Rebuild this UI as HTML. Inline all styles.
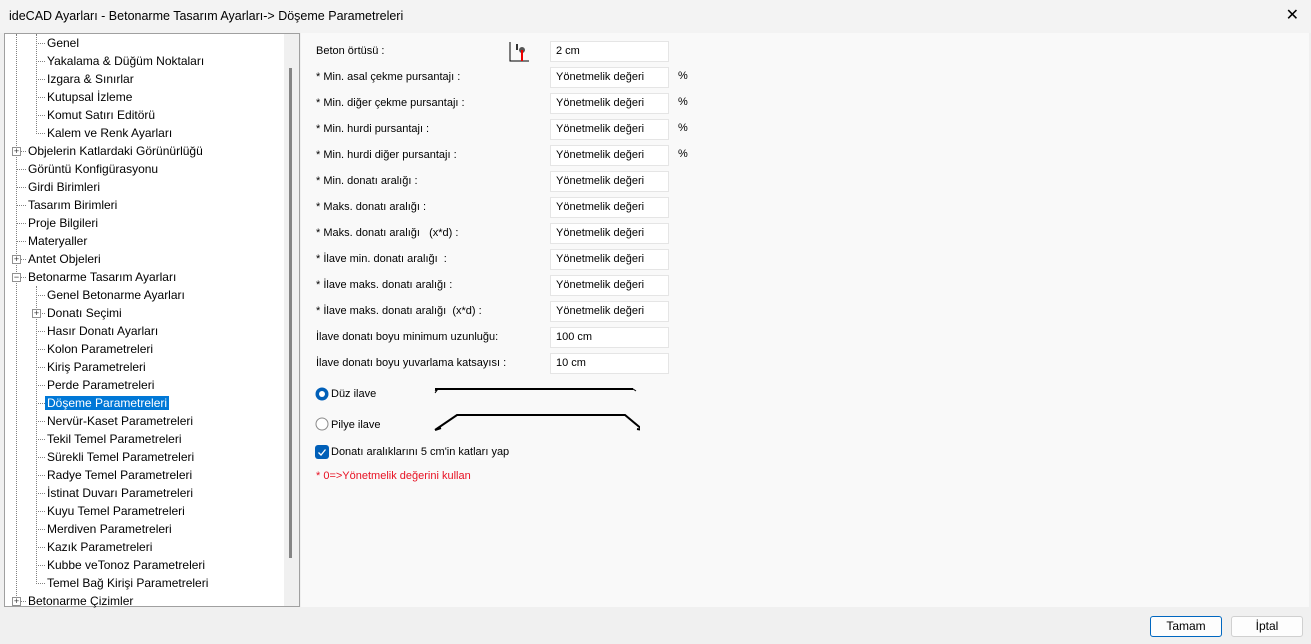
<!DOCTYPE html>
<html><head><meta charset="utf-8"><style>
*{margin:0;padding:0;box-sizing:border-box}
body{width:1311px;height:644px;overflow:hidden;background:#f0f0f0;font-family:"Segoe UI","Liberation Sans",sans-serif;font-size:12px;color:#000;position:relative}
.title{position:absolute;left:0;top:0;width:1311px;height:33px;background:#f3f3f3;font-size:12.5px;line-height:33px;padding-left:9px}
.close{position:absolute;right:12px;top:8px;font-size:16px;line-height:16px}
.tree{position:absolute;left:4px;top:33px;width:296px;height:574px;background:#fff;border:1px solid #a0a0a0;overflow:hidden}
.sb{position:absolute;left:279px;top:0;width:16px;height:574px;background:#f0f0f0}
.thumb{position:absolute;left:284px;top:34px;width:3px;height:490px;background:#858585}
.ti{position:absolute;white-space:nowrap;line-height:16px;font-size:12px}
.vl{position:absolute;border-left:1px dotted #808080}
.hl{position:absolute;border-top:1px dotted #808080;width:8px}
.pb{position:absolute;width:9px;height:9px;border:1px solid #919191;background:#fff;font-size:9px;line-height:7px;text-align:center;color:#333}
.sel{background:#0078d7;color:#fff;padding:0 2px}
.right{position:absolute;left:301px;top:33px;width:1008px;height:574px;background:#f9f9f9}
.lb{position:absolute;left:316px;font-size:11px;line-height:14px}
.lb b{font-weight:normal}
.in{position:absolute;left:550px;width:119px;height:21px;background:#fff;border:1px solid #e5e5e5;font-size:11px;line-height:19px;padding-left:5px}
.pc{position:absolute;left:678px;font-size:11px}
.btn{position:absolute;top:616px;width:72px;height:21px;background:#fdfdfd;border:1px solid #d0d0d0;border-radius:3px;text-align:center;line-height:19px;font-size:12px}
</style></head><body>
<div class="title">ideCAD Ayarları - Betonarme Tasarım Ayarları-&gt; Döşeme Parametreleri<span class="close">✕</span></div>
<div class="tree">
<div class="sb"></div><div class="thumb"></div>
<div class="vl" style="left:31px;top:0;height:100px"></div>
<div class="vl" style="left:11px;top:0;height:574px"></div>
<div class="vl" style="left:31px;top:252px;height:298px"></div>
</div>
<div id="t"></div>
<div class="right"></div>
<div class="lb" style="top:44px">Beton örtüsü :</div>
<svg style="position:absolute;left:509px;top:42px" width="22" height="20"><path d="M1 0V19H20" stroke="#000" fill="none"/><rect x="7" y="2" width="2" height="6" fill="#333"/><circle cx="13" cy="8" r="3" fill="#555"/><path d="M13 8V19" stroke="#e00" stroke-width="2"/></svg>
<div class="in" style="top:41px">2 cm</div>
<div id="f"></div>
<svg style="position:absolute;left:430px;top:385px" width="210" height="50"><path d="M5 6L8 4H203L206 6M8 4L5 8" stroke="#000" fill="none" stroke-width="1"/><path d="M5 4H203" stroke="#000" stroke-width="2"/><path d="M5 45L27 30H195L213 45M5 45l6-2M213 45l-6-1" stroke="#000" fill="none" stroke-width="2"/></svg>
<svg style="position:absolute;left:315px;top:387px" width="14" height="14"><circle cx="7" cy="7" r="6.5" fill="#005fb8"/><circle cx="7" cy="7" r="3" fill="#fff"/></svg>
<div class="lb" style="top:387px;left:331px">Düz ilave</div>
<svg style="position:absolute;left:315px;top:417px" width="14" height="14"><circle cx="7" cy="7" r="6" fill="#fff" stroke="#8a8a8a"/></svg>
<div class="lb" style="top:418px;left:331px">Pilye ilave</div>
<svg style="position:absolute;left:315px;top:445px" width="14" height="14"><rect width="14" height="14" rx="3" fill="#005fb8"/><path d="M3.5 7.5L6 10L10.5 4.5" stroke="#fff" fill="none" stroke-width="1.3"/></svg>
<div class="lb" style="top:445px;left:331px">Donatı aralıklarını 5 cm'in katları yap</div>
<div class="lb" style="top:469px;color:#e81123">* 0=&gt;Yönetmelik değerini kullan</div>
<div class="btn" style="left:1150px;border:1px solid #0067c0">Tamam</div>
<div class="btn" style="left:1231px">İptal</div>
<script>
var T=[[2,"Genel"],[2,"Yakalama &amp; Düğüm Noktaları"],[2,"Izgara &amp; Sınırlar"],[2,"Kutupsal İzleme"],[2,"Komut Satırı Editörü"],[2,"Kalem ve Renk Ayarları"],[1,"Objelerin Katlardaki Görünürlüğü",1],[1,"Görüntü Konfigürasyonu"],[1,"Girdi Birimleri"],[1,"Tasarım Birimleri"],[1,"Proje Bilgileri"],[1,"Materyaller"],[1,"Antet Objeleri",1],[1,"Betonarme Tasarım Ayarları",2],[2,"Genel Betonarme Ayarları"],[2,"Donatı Seçimi",1],[2,"Hasır Donatı Ayarları"],[2,"Kolon Parametreleri"],[2,"Kiriş Parametreleri"],[2,"Perde Parametreleri"],[2,"Döşeme Parametreleri",0,1],[2,"Nervür-Kaset Parametreleri"],[2,"Tekil Temel Parametreleri"],[2,"Sürekli Temel Parametreleri"],[2,"Radye Temel Parametreleri"],[2,"İstinat Duvarı Parametreleri"],[2,"Kuyu Temel Parametreleri"],[2,"Merdiven Parametreleri"],[2,"Kazık Parametreleri"],[2,"Kubbe veTonoz Parametreleri"],[2,"Temel Bağ Kirişi Parametreleri"],[1,"Betonarme Çizimler",1]];
var h="";T.forEach(function(e,i){var y=35+i*18,c=y+8;var x=e[0]==1?28:47;var lx=e[0]==1?16:36;
h+='<div class="hl" style="left:'+lx+'px;top:'+c+'px;width:'+(x-lx-2)+'px"></div>';
if(e[2])h+='<div class="pb" style="left:'+(lx-4)+'px;top:'+(c-4)+'px">'+(e[2]==2?'−':'+')+'</div>';
h+='<div class="ti" style="left:'+(e[3]?x-2:x)+'px;top:'+y+'px">'+(e[3]?'<span class="sel">'+e[1]+'</span>':e[1])+'</div>';});
document.getElementById("t").innerHTML=h;
var F=[["* Min. asal çekme pursantajı :",1,1],["* Min. diğer çekme pursantajı :",1,1],["* Min. hurdi pursantajı :",1,1],["* Min. hurdi diğer pursantajı :",1,1],["* Min. donatı aralığı :",1],["* Maks. donatı aralığı :",1],["* Maks. donatı aralığı &nbsp;&nbsp;(x*d) :",1],["* İlave min. donatı aralığı &nbsp;:",1],["* İlave maks. donatı aralığı :",1],["* İlave maks. donatı aralığı &nbsp;(x*d) :",1],["İlave donatı boyu minimum uzunluğu:",0,0,"100 cm"],["İlave donatı boyu yuvarlama katsayısı :",0,0,"10 cm"]];
var g="";F.forEach(function(e,i){var y=67+i*26;g+='<div class="lb" style="top:'+(y+3)+'px">'+e[0]+'</div><div class="in" style="top:'+y+'px">'+(e[3]||"Yönetmelik değeri")+'</div>';if(e[2])g+='<div class="pc" style="top:'+(y+3)+'px">%</div>';});
document.getElementById("f").innerHTML=g;
</script>
</body></html>
